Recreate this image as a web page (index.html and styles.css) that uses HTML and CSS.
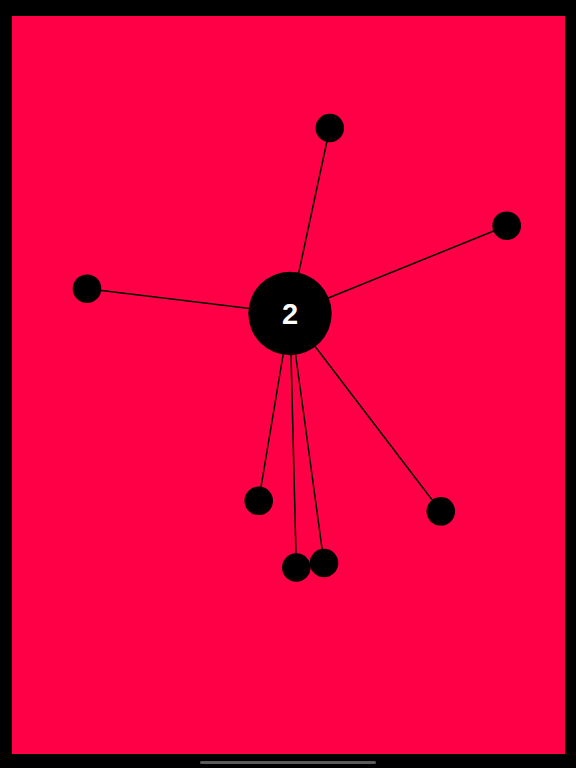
FILE: index.html
```html
<!DOCTYPE html>
<html>
<head>
<meta charset="utf-8">
<link rel="stylesheet" href="styles.css">
</head>
<body>
<div class="screen">
  <div class="stage">
    <svg class="board" width="553" height="738" viewBox="12 16 553 738">
      <g class="pins">
        <line x1="290" y1="313.5" x2="329.8" y2="128"/>
        <line x1="290" y1="313.5" x2="506.7" y2="225.7"/>
        <line x1="290" y1="313.5" x2="87" y2="288.7"/>
        <line x1="290" y1="313.5" x2="258.7" y2="500.8"/>
        <line x1="290" y1="313.5" x2="440.8" y2="511.3"/>
        <line x1="290" y1="313.5" x2="296.3" y2="567.5"/>
        <line x1="290" y1="313.5" x2="324" y2="563"/>
      </g>
      <g class="balls">
        <circle cx="329.8" cy="128" r="14.3"/>
        <circle cx="506.7" cy="225.7" r="14.3"/>
        <circle cx="87" cy="288.7" r="14.3"/>
        <circle cx="258.7" cy="500.8" r="14.3"/>
        <circle cx="440.8" cy="511.3" r="14.3"/>
        <circle cx="296.3" cy="567.5" r="14.3"/>
        <circle cx="324" cy="563" r="14.3"/>
      </g>
      <circle class="core" cx="290" cy="313.5" r="41.7"/>
      <text class="level" x="290" y="324">2</text>
    </svg>
  </div>
  <div class="home-row">
    <div class="home-indicator"></div>
  </div>
</div>
</body>
</html>
```
FILE: styles.css
```css
html, body {
  margin: 0;
  padding: 0;
  background: #000;
}
.screen {
  width: 576px;
  height: 768px;
  padding: 16px 11px 0 12px;
  box-sizing: border-box;
  display: flex;
  flex-direction: column;
}
.stage {
  width: 553px;
  height: 738px;
  background: #ff0046;
}
.board {
  display: block;
}
.pins line {
  stroke: #000;
  stroke-width: 1.5;
}
.balls circle,
.core {
  fill: #000;
}
.level {
  fill: #fff;
  font-family: "Liberation Sans", Arial, sans-serif;
  font-weight: bold;
  font-size: 29px;
  text-anchor: middle;
}
.home-row {
  display: flex;
  justify-content: center;
  padding-top: 7px;
  margin-left: -12px;
  margin-right: -11px;
}
.home-indicator {
  width: 176px;
  height: 3px;
  border-radius: 2px;
  background: #5a5a5a;
}
```
